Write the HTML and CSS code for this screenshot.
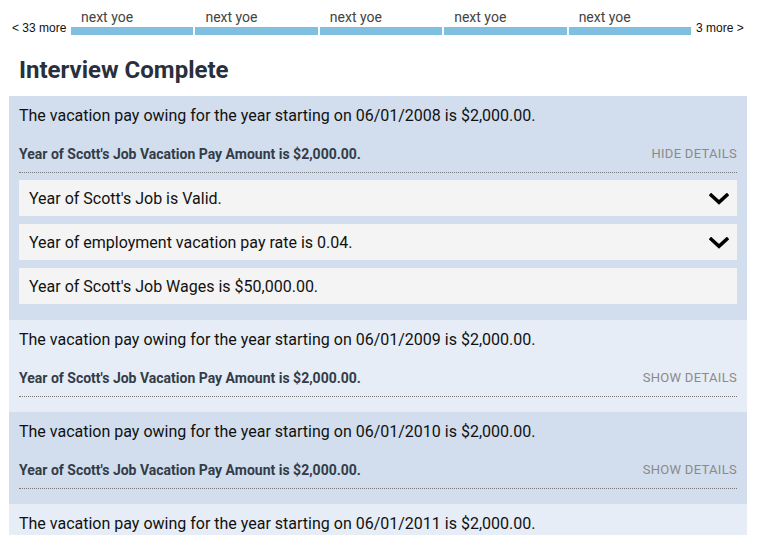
FILE: index.html
```html
<!DOCTYPE html>
<html>
<head>
<meta charset="utf-8">
<link rel="stylesheet" href="styles.css">
</head>
<body>
<nav class="yoe-nav">
  <span class="more more-left">&lt; 33 more</span>
  <div class="yoe-list">
    <div class="yoe"><span class="yoe-label">next yoe</span><span class="yoe-bar"></span></div>
    <div class="yoe"><span class="yoe-label">next yoe</span><span class="yoe-bar"></span></div>
    <div class="yoe"><span class="yoe-label">next yoe</span><span class="yoe-bar"></span></div>
    <div class="yoe"><span class="yoe-label">next yoe</span><span class="yoe-bar"></span></div>
    <div class="yoe"><span class="yoe-label">next yoe</span><span class="yoe-bar"></span></div>
  </div>
  <span class="more more-right">3 more &gt;</span>
</nav>

<h1 class="title">Interview Complete</h1>

<section class="year year-dark">
  <p class="year-text">The vacation pay owing for the year starting on 06/01/2008 is $2,000.00.</p>
  <div class="summary">
    <span class="summary-text">Year of Scott's Job Vacation Pay Amount is $2,000.00.</span>
    <span class="toggle">HIDE DETAILS</span>
  </div>
  <div class="details">
    <div class="detail">
      <span>Year of Scott's Job is Valid.</span>
      <svg class="chev" width="20" height="12" viewBox="0 0 20 12"><path d="M2.2 2.2 L10 9.4 L17.8 2.2" fill="none" stroke="#000" stroke-width="3.6" stroke-linecap="square" stroke-linejoin="miter"/></svg>
    </div>
    <div class="detail">
      <span>Year of employment vacation pay rate is 0.04.</span>
      <svg class="chev" width="20" height="12" viewBox="0 0 20 12"><path d="M2.2 2.2 L10 9.4 L17.8 2.2" fill="none" stroke="#000" stroke-width="3.6" stroke-linecap="square" stroke-linejoin="miter"/></svg>
    </div>
    <div class="detail">
      <span>Year of Scott's Job Wages is $50,000.00.</span>
    </div>
  </div>
</section>

<section class="year year-light">
  <p class="year-text">The vacation pay owing for the year starting on 06/01/2009 is $2,000.00.</p>
  <div class="summary">
    <span class="summary-text">Year of Scott's Job Vacation Pay Amount is $2,000.00.</span>
    <span class="toggle">SHOW DETAILS</span>
  </div>
</section>

<section class="year year-dark">
  <p class="year-text">The vacation pay owing for the year starting on 06/01/2010 is $2,000.00.</p>
  <div class="summary">
    <span class="summary-text">Year of Scott's Job Vacation Pay Amount is $2,000.00.</span>
    <span class="toggle">SHOW DETAILS</span>
  </div>
</section>

<section class="year year-light">
  <p class="year-text">The vacation pay owing for the year starting on 06/01/2011 is $2,000.00.</p>
  <div class="summary">
    <span class="summary-text">Year of Scott's Job Vacation Pay Amount is $2,000.00.</span>
    <span class="toggle">SHOW DETAILS</span>
  </div>
</section>
</body>
</html>
```

FILE: styles.css
```css
html, body {
  margin: 0;
  padding: 0;
  background: #fff;
  overflow: hidden;
}
body {
  font-family: Roboto, "Liberation Sans", sans-serif;
  color: #111;
  padding: 0 11px 0 9px;
  height: 535px;
}
.yoe-nav {
  display: flex;
  align-items: flex-end;
  height: 35px;
}
.more {
  font-family: "Liberation Sans", Arial, sans-serif;
  font-size: 12px;
  color: #111;
  line-height: 14px;
}
.more-left {
  width: 59px;
  margin-left: 3px;
}
.more-right {
  margin-left: 5px;
}
.yoe-list {
  display: flex;
  gap: 2px;
  width: 620px;
}
.yoe {
  flex: 1;
  display: flex;
  flex-direction: column;
}
.yoe-label {
  font-size: 14px;
  color: #444;
  line-height: 16px;
  padding-left: 10px;
  margin-bottom: 2px;
}
.yoe-bar {
  display: block;
  height: 8px;
  background: #80bfe0;
}
.title {
  margin: 21px 0 0 10px;
  font-size: 24px;
  font-weight: 700;
  line-height: 28px;
  color: #27303c;
  height: 40px;
}
.year {
  padding: 10px 10px 15px 10px;
}
.year-dark { background: #d2deee; }
.year-light { background: #e6edf6; }
.year-text {
  margin: 0;
  font-size: 16px;
  line-height: 19px;
  color: #111;
}
.summary {
  display: flex;
  justify-content: space-between;
  align-items: center;
  margin-top: 20px;
  padding-bottom: 9px;
  line-height: 18px;
  border-bottom: 1px dotted #777;
}
.summary-text {
  font-size: 14px;
  font-weight: 700;
  color: #333c48;
}
.toggle {
  font-size: 13px;
  letter-spacing: 0.3px;
  color: #8a8a8a;
}
.details {
  display: flex;
  flex-direction: column;
  gap: 8px;
  margin-top: 7px;
  margin-bottom: 1px;
}
.detail {
  display: flex;
  justify-content: space-between;
  align-items: center;
  background: #f4f4f4;
  height: 36px;
  padding: 0 8px 0 10px;
  font-size: 16px;
  color: #111;
}
.chev {
  display: block;
  margin-top: 1px;
}
```
